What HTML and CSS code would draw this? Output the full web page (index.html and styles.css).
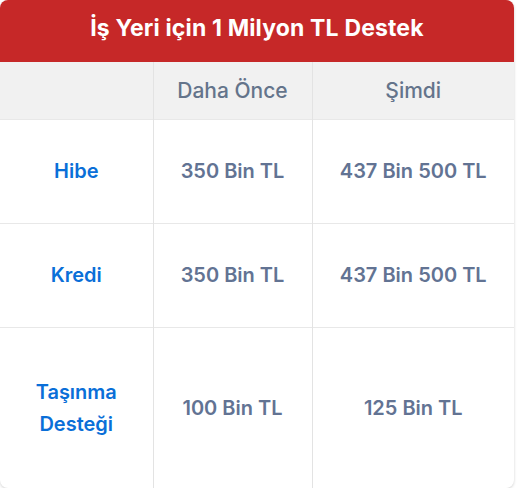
FILE: index.html
```html
<!DOCTYPE html>
<html lang="tr">
<head>
<meta charset="utf-8">
<link rel="stylesheet" href="styles.css">
</head>
<body>
<div class="card">
  <div class="title">İş Yeri için 1 Milyon TL Destek</div>
  <table class="grid">
    <colgroup>
      <col class="c1"><col class="c2"><col class="c3">
    </colgroup>
    <thead>
      <tr class="head-row">
        <th></th>
        <th>Daha Önce</th>
        <th>Şimdi</th>
      </tr>
    </thead>
    <tbody>
      <tr class="row">
        <td class="label">Hibe</td>
        <td class="val">350 Bin TL</td>
        <td class="val">437 Bin 500 TL</td>
      </tr>
      <tr class="row">
        <td class="label">Kredi</td>
        <td class="val">350 Bin TL</td>
        <td class="val">437 Bin 500 TL</td>
      </tr>
      <tr class="row row-tall">
        <td class="label">Taşınma<br>Desteği</td>
        <td class="val">100 Bin TL</td>
        <td class="val">125 Bin TL</td>
      </tr>
    </tbody>
  </table>
</div>
</body>
</html>
```

FILE: styles.css
```css
html, body {
  margin: 0;
  padding: 0;
  background: #ffffff;
}

body {
  font-family: Inter, "DejaVu Sans", sans-serif;
}

.card {
  width: 514px;
  border-radius: 8px;
  overflow: hidden;
  background: #ffffff;
  box-shadow: 0 1px 3px rgba(0, 0, 0, 0.18);
}

.title {
  height: 62px;
  box-sizing: border-box;
  padding-bottom: 6px;
  background: #c62828;
  color: #ffffff;
  font-weight: 700;
  font-size: 23px;
  letter-spacing: 0.15px;
  display: flex;
  align-items: center;
  justify-content: center;
}

.grid {
  width: 100%;
  border-collapse: collapse;
  table-layout: fixed;
}

.c1 { width: 153px; }
.c2 { width: 159px; }
.c3 { width: 202px; }

.head-row {
  height: 57px;
  background: #f1f1f1;
}

.head-row th {
  color: #64748b;
  font-weight: 500;
  font-size: 21px;
  text-align: center;
  padding: 0;
}

.grid th + th,
.grid td + td {
  border-left: 1px solid #e3e3e3;
}

.row {
  height: 104px;
}

.row td {
  border-top: 1px solid #e8e8e8;
  text-align: center;
  padding: 0;
}

.row-tall {
  height: 161px;
}

.label {
  color: #0a6fd8;
  font-weight: 600;
  font-size: 20px;
  line-height: 32px;
}

.val {
  color: #627393;
  font-weight: 600;
  font-size: 20px;
}
```
